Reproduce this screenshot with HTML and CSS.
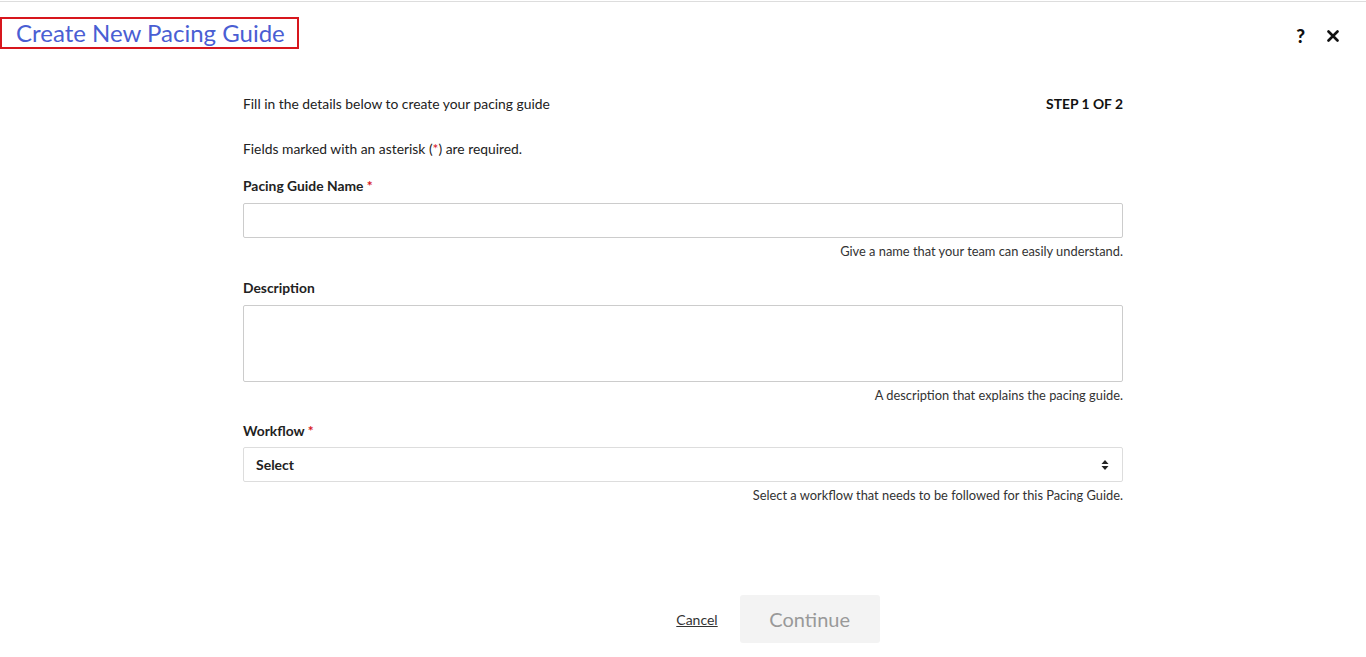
FILE: index.html
```html
<!DOCTYPE html>
<html lang="en">
<head>
    <meta charset="UTF-8">
    <meta name="viewport" content="width=device-width, initial-scale=1.0">
    <title>Create New Pacing Guide</title>
    <link rel="stylesheet" href="styles.css">
</head>
<body>

    <div class="header">
        <h1 class="title">Create New Pacing Guide</h1>
        <div class="header-actions">
            <span class="icon-btn help">?</span>
            <span class="icon-btn close">
                <svg width="12" height="12" viewBox="0 0 12 12"><path d="M1.5 1.5 L10.5 10.5 M10.5 1.5 L1.5 10.5" stroke="#111" stroke-width="2.6" stroke-linecap="round"/></svg>
            </span>
        </div>
    </div>

    <form class="pacing-form">
        <div class="intro-row">
            <span>Fill in the details below to create your pacing guide</span>
            <span class="step">STEP 1 OF 2</span>
        </div>
        <p class="required-note">Fields marked with an asterisk (<span class="req">*</span>) are required.</p>

        <!-- Name -->
        <div class="form-group">
            <label for="guide_name">Pacing Guide Name <span class="req">*</span></label>
            <input type="text" id="guide_name" class="field">
            <div class="hint">Give a name that your team can easily understand.</div>
        </div>

        <!-- Description -->
        <div class="form-group tight">
            <label for="description">Description</label>
            <textarea id="description" class="field area"></textarea>
            <div class="hint">A description that explains the pacing guide.</div>
        </div>

        <!-- Workflow -->
        <div class="form-group">
            <label for="workflow" class="select-label">Workflow <span class="req">*</span></label>
            <div class="field select">
                <span>Select</span>
                <svg width="8" height="12" viewBox="0 0 8 12"><path d="M4 1 L7.5 5 L0.5 5 Z M4 11 L7.5 7 L0.5 7 Z" fill="#222"/></svg>
            </div>
            <div class="hint">Select a workflow that needs to be followed for this Pacing Guide.</div>
        </div>
    </form>

    <div class="footer">
        <a class="cancel">Cancel</a>
        <button type="button" class="btn-continue">Continue</button>
    </div>

</body>
</html>
```

FILE: styles.css
```css
body {
    font-family: Lato, "Open Sans", sans-serif;
    margin: 0;
    padding: 0;
    background: #fff;
    color: #222;
    font-size: 13.85px;
}
.header {
    border-top: 1px solid #ddd;
    margin-top: 1px;
    padding-top: 15px;
    height: 48px;
    display: flex;
    justify-content: space-between;
    align-items: flex-start;
}
.title {
    margin: 0;
    border: 2px solid #d7161d;
    padding: 0 12px 0 14px;
    height: 28px;
    line-height: 28px;
    font-size: 24px;
    font-weight: normal;
    color: #4a5ed3;
}
.header-actions {
    display: flex;
    align-items: center;
    gap: 22px;
    padding: 10px 27px 0 0;
}
.icon-btn {
    display: flex;
    align-items: center;
    font-weight: 900;
    font-size: 19px;
    color: #111;
    line-height: 18px;
}
.pacing-form {
    width: 880px;
    margin: 0 auto;
    padding-top: 31px;
}
.intro-row {
    display: flex;
    justify-content: space-between;
    line-height: 16px;
}
.step {
    font-weight: bold;
    color: #111;
}
.required-note {
    margin: 29px 0 21px;
    line-height: 16px;
}
.req {
    color: #d7161d;
}
.form-group {
    margin-bottom: 21px;
}
.form-group.tight {
    margin-bottom: 20px;
}
label {
    display: block;
    font-weight: bold;
    line-height: 16px;
    margin-bottom: 9px;
    color: #222;
}
label.select-label {
    margin-bottom: 8px;
}
.field {
    display: block;
    box-sizing: border-box;
    width: 100%;
    height: 35px;
    border: 1px solid #ccc;
    border-radius: 2px;
    margin: 0;
    font-family: inherit;
    font-size: 14px;
    background: #fff;
}
.area {
    height: 77px;
    resize: none;
}
.select {
    display: flex;
    align-items: center;
    justify-content: space-between;
    padding: 0 13px 0 12px;
    font-weight: bold;
    color: #222;
    border-color: #ddd;
}
.hint {
    text-align: right;
    font-size: 12.85px;
    line-height: 16px;
    margin-top: 5px;
    color: #333;
}
.footer {
    display: flex;
    justify-content: center;
    align-items: center;
    gap: 22px;
    padding-left: 190px;
    margin-top: 92px;
}
.cancel {
    color: #333;
    text-decoration: underline;
    font-size: 14px;
    cursor: pointer;
}
.btn-continue {
    width: 140px;
    height: 48px;
    background-color: #f3f3f3;
    color: #999;
    border: none;
    border-radius: 3px;
    font-family: inherit;
    font-size: 20px;
}
```
